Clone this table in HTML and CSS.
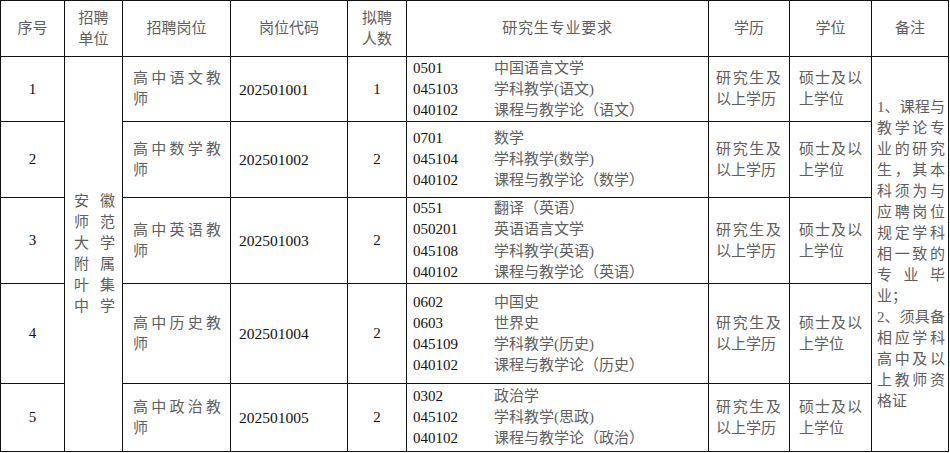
FILE: index.html
```html
<!DOCTYPE html>
<html lang="zh-CN">
<head>
<meta charset="utf-8">
<title>招聘岗位表</title>
<link rel="stylesheet" href="styles.css">
</head>
<body>
<table class="jobs">
  <colgroup>
    <col class="c-no">
    <col class="c-unit">
    <col class="c-post">
    <col class="c-code">
    <col class="c-count">
    <col class="c-major">
    <col class="c-edu">
    <col class="c-degree">
    <col class="c-note">
  </colgroup>
  <thead>
    <tr class="head">
      <th>序号</th>
      <th>招聘<br>单位</th>
      <th>招聘岗位</th>
      <th>岗位代码</th>
      <th>拟聘<br>人数</th>
      <th class="wide">研究生专业要求</th>
      <th>学历</th>
      <th>学位</th>
      <th>备注</th>
    </tr>
  </thead>
  <tbody>
    <tr class="r1">
      <td class="num">1</td>
      <td class="unit" rowspan="5">安徽<br>师范<br>大学<br>附属<br>叶集<br>中学</td>
      <td class="post">高中语文教师</td>
      <td class="code">202501001</td>
      <td class="num">1</td>
      <td class="major">
        <div class="mline"><span class="mcode">0501</span><span>中国语言文学</span></div>
        <div class="mline"><span class="mcode">045103</span><span>学科教学(语文)</span></div>
        <div class="mline"><span class="mcode">040102</span><span>课程与教学论（语文）</span></div>
      </td>
      <td class="edu">研究生及以上学历</td>
      <td class="degree">硕士及以上学位</td>
      <td class="note" rowspan="5">
        <p>1、课程与教学论专业的研究生，其本科须为与应聘岗位规定学科相一致的专业毕业；</p>
        <p>2、须具备相应学科高中及以上教师资格证</p>
      </td>
    </tr>
    <tr class="r2">
      <td class="num">2</td>
      <td class="post">高中数学教师</td>
      <td class="code">202501002</td>
      <td class="num">2</td>
      <td class="major">
        <div class="mline"><span class="mcode">0701</span><span>数学</span></div>
        <div class="mline"><span class="mcode">045104</span><span>学科教学(数学)</span></div>
        <div class="mline"><span class="mcode">040102</span><span>课程与教学论（数学）</span></div>
      </td>
      <td class="edu">研究生及以上学历</td>
      <td class="degree">硕士及以上学位</td>
    </tr>
    <tr class="r3">
      <td class="num">3</td>
      <td class="post">高中英语教师</td>
      <td class="code">202501003</td>
      <td class="num">2</td>
      <td class="major tall">
        <div class="mline"><span class="mcode">0551</span><span>翻译（英语）</span></div>
        <div class="mline"><span class="mcode">050201</span><span>英语语言文学</span></div>
        <div class="mline"><span class="mcode">045108</span><span>学科教学(英语)</span></div>
        <div class="mline"><span class="mcode">040102</span><span>课程与教学论（英语）</span></div>
      </td>
      <td class="edu">研究生及以上学历</td>
      <td class="degree">硕士及以上学位</td>
    </tr>
    <tr class="r4">
      <td class="num">4</td>
      <td class="post">高中历史教师</td>
      <td class="code">202501004</td>
      <td class="num">2</td>
      <td class="major">
        <div class="mline"><span class="mcode">0602</span><span>中国史</span></div>
        <div class="mline"><span class="mcode">0603</span><span>世界史</span></div>
        <div class="mline"><span class="mcode">045109</span><span>学科教学(历史)</span></div>
        <div class="mline"><span class="mcode">040102</span><span>课程与教学论（历史）</span></div>
      </td>
      <td class="edu">研究生及以上学历</td>
      <td class="degree">硕士及以上学位</td>
    </tr>
    <tr class="r5">
      <td class="num">5</td>
      <td class="post">高中政治教师</td>
      <td class="code">202501005</td>
      <td class="num">2</td>
      <td class="major">
        <div class="mline"><span class="mcode">0302</span><span>政治学</span></div>
        <div class="mline"><span class="mcode">045102</span><span>学科教学(思政)</span></div>
        <div class="mline"><span class="mcode">040102</span><span>课程与教学论（政治）</span></div>
      </td>
      <td class="edu">研究生及以上学历</td>
      <td class="degree">硕士及以上学位</td>
    </tr>
  </tbody>
</table>
</body>
</html>
```

FILE: styles.css
```css
* {
  box-sizing: border-box;
}

body {
  margin: 0;
  background: #ffffff;
}

.jobs {
  border-collapse: collapse;
  table-layout: fixed;
  width: 949px;
  font-family: "Liberation Serif", "Noto Sans CJK SC", serif;
  font-size: 15px;
  line-height: 21px;
  color: #5e5e5e;
}

.jobs th,
.jobs td {
  border: 1px solid #111111;
  padding: 0;
  vertical-align: middle;
  font-weight: normal;
}

.c-no { width: 64px; }
.c-unit { width: 58px; }
.c-post { width: 108px; }
.c-code { width: 117px; }
.c-count { width: 59px; }
.c-major { width: 302px; }
.c-edu { width: 81px; }
.c-degree { width: 82px; }
.c-note { width: 77px; }

.head { height: 56px; }
.r1 { height: 65px; }
.r2 { height: 76px; }
.r3 { height: 86px; }
.r4 { height: 100px; }
.r5 { height: 68px; }

.jobs th {
  text-align: center;
  line-height: 21px;
}

.jobs th.wide {
  letter-spacing: 0.8px;
}

.jobs td.num {
  text-align: center;
  color: #111111;
}

.jobs td.code {
  padding-left: 8px;
  color: #111111;
  font-size: 15.5px;
}

.jobs td.unit {
  padding: 0 7px 0 9px;
  text-align: justify;
  text-align-last: justify;
}

.jobs td.post {
  padding: 0 9px 0 10px;
  text-align: justify;
}

.jobs td.major {
  padding-left: 6px;
}

.jobs td.tall {
  line-height: 21.3px;
}

.mline {
  display: grid;
  grid-template-columns: 81px auto;
}

.mcode {
  color: #111111;
}

.jobs td.edu {
  padding: 0 8px 0 7px;
  text-align: justify;
}

.jobs td.degree {
  padding: 0 9px 0 9px;
  text-align: justify;
}

.jobs td.note {
  padding: 0 3px 0 5px;
  text-align: justify;
}

.note p {
  margin: 0;
}
```
